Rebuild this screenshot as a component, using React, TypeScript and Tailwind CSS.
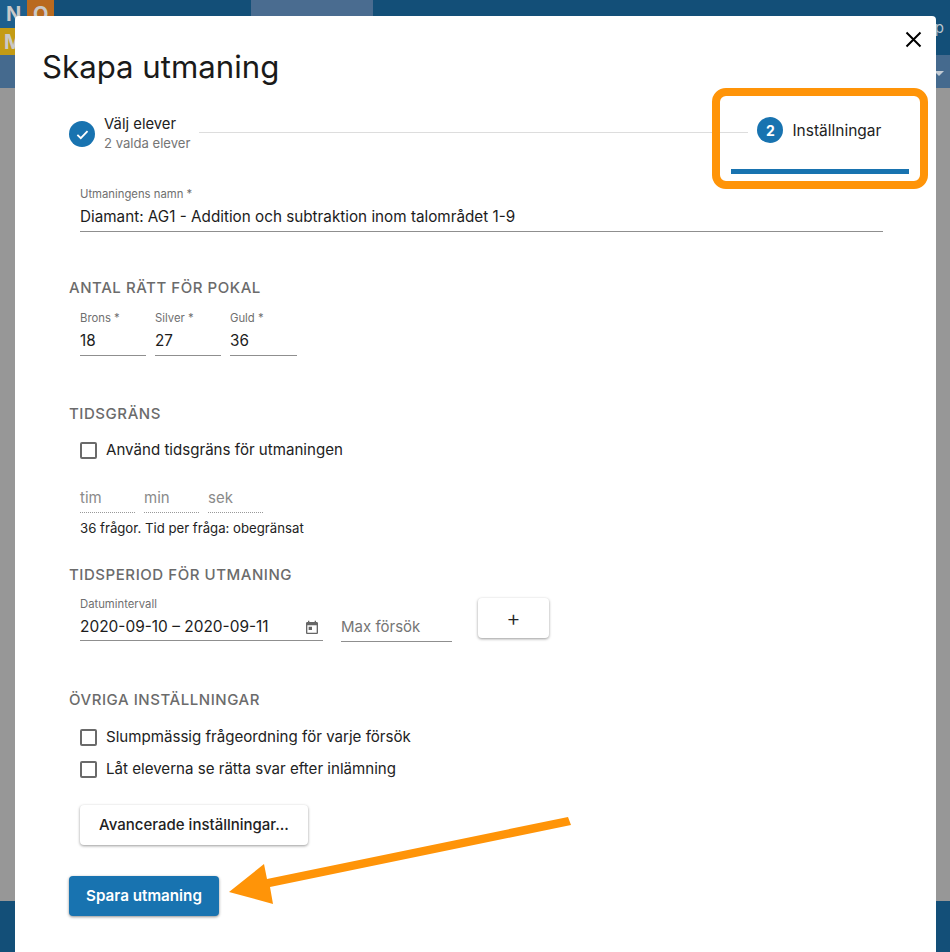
import React from "react";

const font = { fontFamily: "Inter, 'Liberation Sans', sans-serif" };

function Section({ children, className = "" }: { children: React.ReactNode; className?: string }) {
  return <h3 className={"ml-[54px] text-[15px] leading-[18px] font-medium uppercase tracking-[0.55px] text-[#6b6b6b] " + className}>{children}</h3>;
}

function Field({ label, value, className = "", valueClass = "text-[15.25px]" }: { label: string; value: string; className?: string; valueClass?: string }) {
  return (
    <div className={"flex flex-col border-b border-[#8f8f8f] " + className}>
      <span className="text-[11.3px] leading-[14px] text-[#6f6f6f]">{label}</span>
      <span className={"mt-[5px] leading-[22px] text-[#1c1c1c] " + valueClass}>{value}</span>
    </div>
  );
}

function Check({ label, className = "" }: { label: string; className?: string }) {
  return (
    <label className={"ml-[65px] flex h-[32px] items-center gap-[9px] text-[15.1px] text-[#222] " + className}>
      <span className="h-[17px] w-[17px] rounded-[2px] border-2 border-[#6a6a6a]" />
      {label}
    </label>
  );
}

function Dotted({ label }: { label: string }) {
  return (
    <div className="h-[26px] w-[55px] border-b border-dotted border-[#999999] text-[15px] leading-[22px] text-[#8a8a8a]">{label}</div>
  );
}

export default function App() {
  return (
    <div className="relative h-[952px] w-[950px] overflow-hidden bg-[#979797]" style={font}>
      <header className="relative flex h-[55px] bg-[#134f78]">
        <div className="grid h-[55px] w-[54px] grid-cols-2 grid-rows-2 text-[20px] font-bold leading-[28px] text-[#c9c9c9]">
          <span className="bg-[#1d5f8d] pl-[6px]">N</span>
          <span className="bg-[#b96a1f] pl-[6px]">O</span>
          <span className="bg-[#c49b14] pl-[4px]">M</span>
          <span className="bg-[#134f78]" />
        </div>
        <div className="ml-[197px] h-full w-[122px] bg-[#4a6c90]" />
        <span className="absolute right-[6px] top-[19px] text-[15px] leading-[18px] text-[#b9c4ce]">p</span>
      </header>
      <div className="h-[33px] bg-[#456a8e]" />
      <div className="absolute bottom-0 left-0 h-[51px] w-full bg-[#134f78]" />
      <div className="absolute right-[6px] top-[71px] h-0 w-0 border-x-[5px] border-t-[5px] border-x-transparent border-t-[#c4ccd4]" />

      <main className="absolute left-[15px] top-[16px] h-[940px] w-[921px] rounded-[4px] bg-white text-[#1c1c1c]">
        <button className="absolute right-[14px] top-[15px] text-black" aria-label="Stäng">
          <svg width="17" height="17" viewBox="0 0 17 17" fill="none" stroke="currentColor" strokeWidth="2">
            <path d="M1.5 1.5l14 14M15.5 1.5l-14 14" />
          </svg>
        </button>
        <h1 className="ml-[27px] pt-[29px] text-[31.2px] font-normal leading-[44px] text-[#1a1a1a]">Skapa utmaning</h1>

        <div className="ml-[54px] mt-[27px] flex h-[72px] w-[840px]">
          <div className="flex h-[36px] items-center">
            <span className="flex h-[26px] w-[26px] items-center justify-center rounded-full bg-[#1873b0]">
              <svg width="15" height="15" viewBox="0 0 14 14" fill="none" stroke="white" strokeWidth="1.7">
                <path d="M2.2 7.4l3.2 3.1 6.3-6.6" />
              </svg>
            </span>
            <div className="ml-[9px] mt-[-2px]">
              <div className="text-[14.8px] leading-[18px] text-[#222]">Välj elever</div>
              <div className="mt-px text-[13.1px] leading-[18px] text-[#757575]">2 valda elever</div>
            </div>
          </div>
          <div className="ml-[9px] mt-[16px] h-px w-[549px] bg-[#dddddd]" />
          <div className="flex flex-1 flex-col">
            <div className="ml-[9px] flex h-[28px] items-center">
              <span className="flex h-[26px] w-[26px] items-center justify-center rounded-full bg-[#1873b0] text-[14px] font-bold text-white">2</span>
              <span className="ml-[9px] mt-px text-[15.5px] text-[#222]">Inställningar</span>
            </div>
          </div>
        </div>

        <Field label="Utmaningens namn *" value="Diamant: AG1 - Addition och subtraktion inom talområdet 1-9" className="ml-[65px] mt-[-1px] h-[45px] w-[803px]" />

        <Section className="mt-[47px]">Antal rätt för pokal</Section>
        <div className="ml-[65px] mt-[14px] flex gap-[9px]">
          <Field label="Brons *" value="18" className="h-[45px] w-[66px]" />
          <Field label="Silver *" value="27" className="h-[45px] w-[66px]" />
          <Field label="Guld *" value="36" className="h-[45px] w-[67px]" />
        </div>

        <Section className="mt-[49px]">Tidsgräns</Section>
        <Check label="Använd tidsgräns för utmaningen" className="mt-[11px]" />
        <div className="ml-[65px] mt-[21px] flex gap-[9px]">
          <Dotted label="tim" />
          <Dotted label="min" />
          <Dotted label="sek" />
        </div>
        <p className="ml-[65px] mt-[6px] text-[13.2px] leading-[18px] text-[#222]">36 frågor. Tid per fråga: obegränsat</p>

        <Section className="mt-[29px]">Tidsperiod för utmaning</Section>
        <div className="ml-[65px] mt-[13px] flex items-start">
          <div className="relative">
            <Field label="Datumintervall" value="2020-09-10 – 2020-09-11" className="h-[44px] w-[243px]" valueClass="text-[15.45px]" />
            <svg className="absolute right-[3px] top-[23px]" width="16" height="16" viewBox="0 0 24 24" fill="#666">
              <path d="M19 3h-1V1h-2v2H8V1H6v2H5c-1.1 0-2 .9-2 2v14c0 1.1.9 2 2 2h14c1.1 0 2-.9 2-2V5c0-1.1-.9-2-2-2zm0 16H5V8h14v11zM7 10h5v5H7z" />
            </svg>
          </div>
          <div className="ml-[18px] mt-[18px] h-[27px] w-[111px] border-b border-[#8f8f8f] text-[15px] leading-[24px] text-[#757575]">Max försök</div>
          <button className="ml-[26px] mt-px flex h-[40px] w-[71px] items-center justify-center rounded-[4px] bg-white text-[22px] font-light text-[#222] shadow-[0_1px_3px_rgba(0,0,0,0.4)]">+</button>
        </div>

        <Section className="mt-[49px]">Övriga inställningar</Section>
        <Check label="Slumpmässig frågeordning för varje försök" className="mt-[12px]" />
        <Check label="Låt eleverna se rätta svar efter inlämning" />

        <button className="ml-[65px] mt-[20px] block h-[40px] w-[228px] rounded-[4px] bg-white text-[15px] font-medium text-[#222] shadow-[0_1px_3px_rgba(0,0,0,0.4)]">Avancerade inställningar...</button>
        <button className="ml-[54px] mt-[31px] block h-[40px] w-[150px] rounded-[4px] bg-[#1873b0] text-[15.2px] font-semibold text-white shadow-[0_1px_3px_rgba(0,0,0,0.45)]">Spara utmaning</button>
      </main>

      <div className="absolute left-[712px] top-[88px] h-[101px] w-[216px] rounded-[14px] border-[8px] border-[#ff9408]">
        <div className="absolute bottom-[7px] left-[11px] h-[5px] w-[178px] bg-[#1873b0]" />
      </div>
      <svg className="absolute left-[225px] top-[812px]" width="350" height="96" viewBox="0 0 350 96" fill="#ff9408">
        <path d="M343 5L346 13L45 75L48 92L4 80L39 52L42 67Z" />
      </svg>
    </div>
  );
}
